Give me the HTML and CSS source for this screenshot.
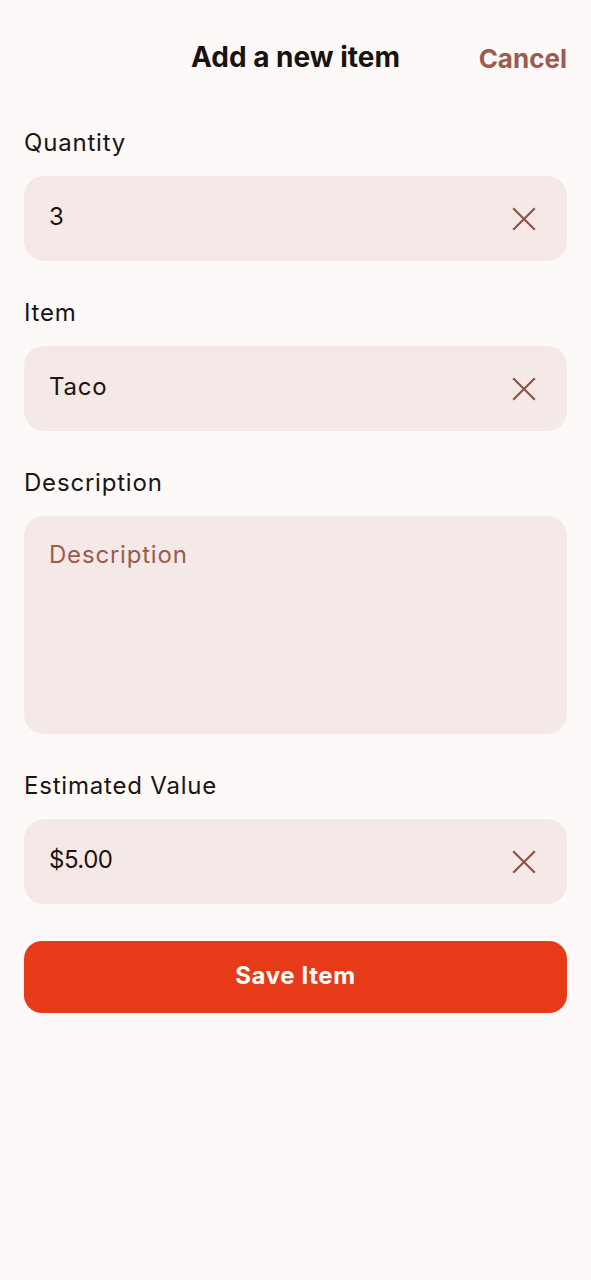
FILE: index.html
```html
<!DOCTYPE html>
<html lang="en">
<head>
<meta charset="utf-8">
<link rel="stylesheet" href="styles.css">
</head>
<body>
<div class="screen">
  <header class="header">
    <h1 class="title">Add a new item</h1>
    <button class="cancel">Cancel</button>
  </header>
  <form class="form">
    <div class="field">
      <label class="label">Quantity</label>
      <div class="input">
        <span class="value num">3</span>
        <svg class="clear" viewBox="0 0 24 24" width="26" height="26"><path d="M2 2L22 22M22 2L2 22" /></svg>
      </div>
    </div>
    <div class="field">
      <label class="label">Item</label>
      <div class="input">
        <span class="value">Taco</span>
        <svg class="clear" viewBox="0 0 24 24" width="26" height="26"><path d="M2 2L22 22M22 2L2 22" /></svg>
      </div>
    </div>
    <div class="field">
      <label class="label">Description</label>
      <div class="textarea">
        <span class="placeholder">Description</span>
      </div>
    </div>
    <div class="field">
      <label class="label">Estimated Value</label>
      <div class="input">
        <span class="value num">$5.00</span>
        <svg class="clear" viewBox="0 0 24 24" width="26" height="26"><path d="M2 2L22 22M22 2L2 22" /></svg>
      </div>
    </div>
    <button type="button" class="save">Save Item</button>
  </form>
</div>
</body>
</html>
```
FILE: styles.css
```css
* { box-sizing: border-box; }
html, body { margin: 0; padding: 0; }
body {
  background: #fcf9f8;
  font-family: Inter, "Noto Sans", sans-serif;
  color: #1c1412;
  height: 1280px;
}
.screen { padding: 0 24px; }
.header {
  position: relative;
  height: 114px;
  margin-bottom: 14px;
  display: flex;
  align-items: center;
  justify-content: center;
}
.title {
  margin: 0;
  font-size: 28px;
  font-weight: 700;
  letter-spacing: 0px;
  color: #1a1210;
}
.cancel {
  position: absolute;
  right: 0;
  top: 43px;
  background: none;
  border: 0;
  padding: 0;
  font-family: inherit;
  font-size: 26px;
  font-weight: 700;
  color: #9b5b50;
}
.form { display: flex; flex-direction: column; gap: 37px; }
.field { display: flex; flex-direction: column; gap: 18px; }
.label {
  font-size: 24px;
  line-height: 30px;
  font-weight: 400;
  letter-spacing: 0.8px;
  color: #1c1412;
}
.input {
  height: 85px;
  border-radius: 20px;
  background: #f4e9e7;
  display: flex;
  align-items: center;
  justify-content: space-between;
  padding: 0 30px 0 25px;
}
.value { font-size: 24px; letter-spacing: 0.8px; color: #1c1412; padding-bottom: 5px; }
.value.num { font-size: 24px; letter-spacing: -0.5px; }
.clear { fill: none; stroke: #8f5248; stroke-width: 2; }
.textarea {
  height: 218px;
  border-radius: 20px;
  background: #f4e9e7;
  padding: 24px 25px;
}
.placeholder { font-size: 24px; letter-spacing: 0.8px; color: #9b5b50; }
.save {
  height: 72px;
  border: 0;
  border-radius: 18px;
  background: #e63a19;
  color: #fff;
  font-family: inherit;
  font-size: 24px;
  font-weight: 700;
  letter-spacing: 0.6px;
  padding: 0 0 4px;
}
```
